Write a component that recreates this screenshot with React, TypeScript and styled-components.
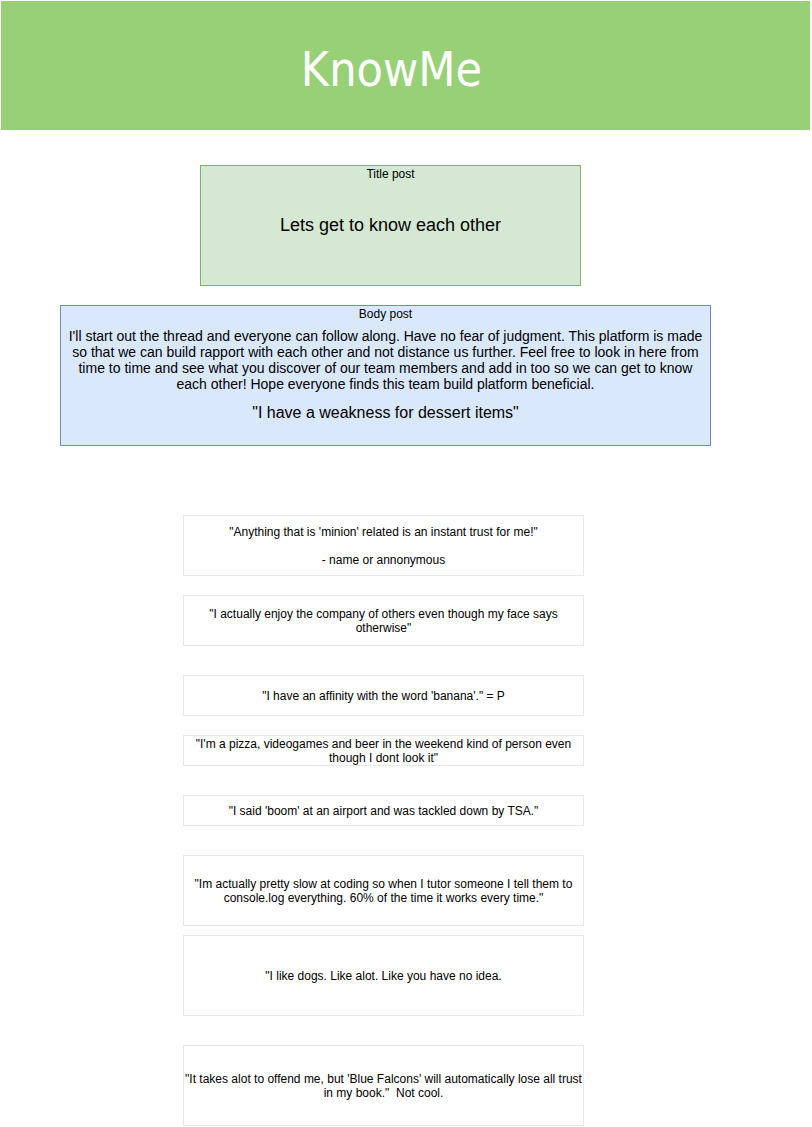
import React from "react";
import styled, { createGlobalStyle } from "styled-components";

const GlobalStyle = createGlobalStyle`
  html, body {
    margin: 0;
    padding: 0;
    background: #ffffff;
  }
  body {
    font-family: "Liberation Sans", Arial, Helvetica, sans-serif;
    color: #000000;
  }
`;

const Page = styled.div`
  display: flex;
  flex-direction: column;
  align-items: flex-start;
  padding: 1px 0 0 1px;
  width: 812px;
  box-sizing: border-box;
`;

const Header = styled.header`
  width: 809px;
  height: 129px;
  background: #97d077;
  display: flex;
  align-items: center;
  justify-content: center;
  padding: 6px 28px 0 0;
  box-sizing: border-box;
`;

const Logo = styled.h1`
  margin: 0;
  font-family: "DejaVu Sans Condensed", "DejaVu Sans", Tahoma, sans-serif;
  font-stretch: condensed;
  font-weight: normal;
  font-size: 48px;
  color: #ffffff;
`;

interface PostProps {
  $left: number;
  $top: number;
  $width: number;
  $height: number;
  $fill: string;
  $stroke: string;
}

const Post = styled.section<PostProps>`
  margin: ${(p) => p.$top}px 0 0 ${(p) => p.$left - 1}px;
  width: ${(p) => p.$width}px;
  height: ${(p) => p.$height}px;
  box-sizing: border-box;
  background: ${(p) => p.$fill};
  border: 1px solid ${(p) => p.$stroke};
  display: flex;
  flex-direction: column;
  align-items: center;
  text-align: center;
`;

const PostLabel = styled.div`
  font-size: 12px;
  line-height: 14px;
  margin-top: 1px;
`;

const BigLine = styled.div<{ $gap: number; $size: number }>`
  font-size: ${(p) => p.$size}px;
  line-height: ${(p) => p.$size + 4}px;
  margin-top: ${(p) => p.$gap}px;
`;

const Paragraph = styled.p`
  margin: 7px 0 0;
  font-size: 14px;
  line-height: 16px;
  white-space: nowrap;
`;

const CardList = styled.div`
  display: flex;
  flex-direction: column;
  margin-top: 69px;
`;

const Card = styled.div<{ $gap: number; $height: number }>`
  margin: ${(p) => p.$gap}px 0 0 182px;
  width: 401px;
  height: ${(p) => p.$height}px;
  box-sizing: border-box;
  border: 1px solid #e8e8e8;
  display: flex;
  align-items: center;
  justify-content: center;
  text-align: center;
  font-size: 12px;
  line-height: 14px;
  white-space: nowrap;
`;

const cards = [
  {
    gap: 0,
    height: 61,
    lines: [
      "\"Anything that is 'minion' related is an instant trust for me!\"",
      "\u00a0",
      "- name or annonymous",
    ],
  },
  {
    gap: 19,
    height: 51,
    lines: [
      "\"I actually enjoy the company of others even though my face says",
      "otherwise\"",
    ],
  },
  {
    gap: 29,
    height: 41,
    lines: ["\"I have an affinity with the word 'banana'.\" = P"],
  },
  {
    gap: 19,
    height: 31,
    lines: [
      "\"I'm a pizza, videogames and beer in the weekend kind of person even",
      "though I dont look it\"",
    ],
  },
  {
    gap: 29,
    height: 31,
    lines: ["\"I said 'boom' at an airport and was tackled down by TSA.\""],
  },
  {
    gap: 29,
    height: 71,
    lines: [
      "\"Im actually pretty slow at coding so when I tutor someone I tell them to",
      "console.log everything. 60% of the time it works every time.\"",
    ],
  },
  {
    gap: 9,
    height: 81,
    lines: ["\"I like dogs. Like alot. Like you have no idea."],
  },
  {
    gap: 29,
    height: 81,
    lines: [
      "\"It takes alot to offend me, but 'Blue Falcons' will automatically lose all trust",
      "in my book.\"\u00a0 Not cool.",
    ],
  },
];

const bodyLines = [
  "I'll start out the thread and everyone can follow along. Have no fear of judgment. This platform is made",
  "so that we can build rapport with each other and not distance us further. Feel free to look in here from",
  "time to time and see what you discover of our team members and add in too so we can get to know",
  "each other! Hope everyone finds this team build platform beneficial.",
];

function App() {
  return (
    <>
      <GlobalStyle />
      <Page>
        <Header>
          <Logo>KnowMe</Logo>
        </Header>

        <Post
          $left={200}
          $top={35}
          $width={381}
          $height={121}
          $fill="#d5e8d4"
          $stroke="#82b366"
        >
          <PostLabel>Title post</PostLabel>
          <BigLine $gap={33} $size={18}>
            Lets get to know each other
          </BigLine>
        </Post>

        <Post
          $left={60}
          $top={19}
          $width={651}
          $height={141}
          $fill="#dae8fc"
          $stroke="#6c8ebf"
        >
          <PostLabel>Body post</PostLabel>
          <Paragraph>
            {bodyLines.map((l, i) => (
              <React.Fragment key={i}>
                {l}
                {i < bodyLines.length - 1 && <br />}
              </React.Fragment>
            ))}
          </Paragraph>
          <BigLine $gap={11} $size={16}>
            "I have a weakness for dessert items"
          </BigLine>
        </Post>

        <CardList>
          {cards.map((c, i) => (
            <Card key={i} $gap={c.gap} $height={c.height}>
              <div>
                {c.lines.map((l, j) => (
                  <React.Fragment key={j}>
                    {l}
                    {j < c.lines.length - 1 && <br />}
                  </React.Fragment>
                ))}
              </div>
            </Card>
          ))}
        </CardList>
      </Page>
    </>
  );
}

export default App;
